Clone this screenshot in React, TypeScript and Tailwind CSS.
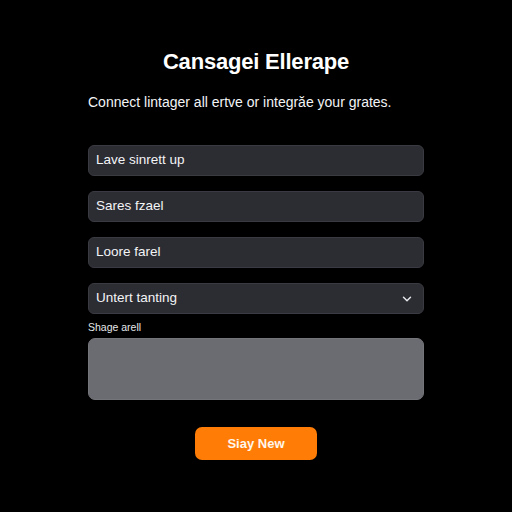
import React from 'react';
import { ChevronDown } from 'lucide-react';

const App = () => {
  const fields = ["Lave sinrett up", "Sares fzael", "Loore farel"];

  return (
    <div className="w-[512px] h-[512px] bg-black font-['Liberation_Sans',Arial,sans-serif] text-white">
      <div className="flex flex-col px-[88px] pt-[50px]">
        {/* Title */}
        <h1 className="text-center text-[22px] leading-[24px] font-bold tracking-[-0.2px] text-white">
          Cansagei Ellerape
        </h1>
        <p className="mt-[19px] text-[14px] leading-[18px] text-gray-100">
          Connect lintager all ertve or integrăe your grates.
        </p>

        {/* Fields */}
        <div className="mt-[34px] flex flex-col gap-[15px]">
          {fields.map((label, index) => (
            <div
              key={index}
              className="h-[31px] rounded-[6px] bg-[#2c2c33] border border-[#3a3a42] flex items-center px-[7px] text-[13.5px] text-gray-100"
            >
              {label}
            </div>
          ))}
          <div className="h-[31px] rounded-[6px] bg-[#2c2c33] border border-[#3a3a42] flex items-center justify-between px-[7px] text-[13.5px] text-gray-100">
            <span>Untert tanting</span>
            <ChevronDown size={14} strokeWidth={2.5} className="mr-[2px] text-gray-200" />
          </div>
        </div>

        <div className="mt-[6px] text-[10.5px] leading-[14px] text-gray-200">Shage arell</div>
        <div className="mt-[4px] h-[62px] rounded-[7px] bg-[#6b6b72] border border-[#74747b]" />

        {/* Action */}
        <div className="mt-[27px] flex justify-center">
          <button className="w-[122px] h-[33px] rounded-[7px] bg-[#ff7d07] text-[13px] font-bold text-orange-50">
            Siay New
          </button>
        </div>
      </div>
    </div>
  );
};

export default App;
